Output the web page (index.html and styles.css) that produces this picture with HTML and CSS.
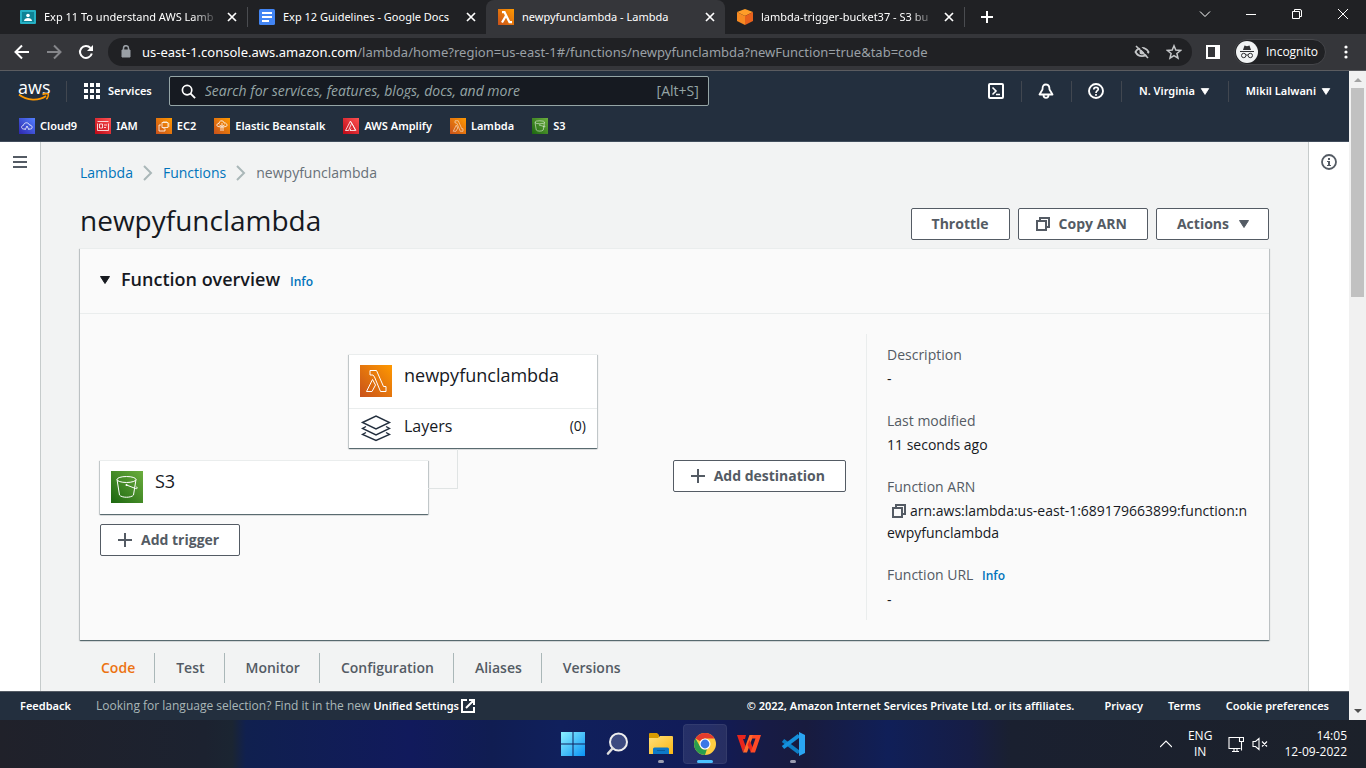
FILE: index.html
```html
<!DOCTYPE html>
<html lang="en">
<head>
<meta charset="utf-8">
<title>newpyfunclambda - Lambda</title>
<link rel="stylesheet" href="styles.css">
</head>
<body>
<svg class="defs" aria-hidden="true">
  <defs>
    <linearGradient id="orange" x1="0" y1="1" x2="1" y2="0"><stop offset="0" stop-color="#c8511b"/><stop offset="1" stop-color="#f90"/></linearGradient>
    <linearGradient id="green" x1="0" y1="1" x2="1" y2="0"><stop offset="0" stop-color="#1b660f"/><stop offset="1" stop-color="#6cae3e"/></linearGradient>
    <linearGradient id="red" x1="0" y1="1" x2="1" y2="0"><stop offset="0" stop-color="#bd0816"/><stop offset="1" stop-color="#ff5252"/></linearGradient>
    <linearGradient id="blue" x1="0" y1="1" x2="1" y2="0"><stop offset="0" stop-color="#2e27ad"/><stop offset="1" stop-color="#527fff"/></linearGradient>
    <linearGradient id="win" x1="0" y1="0" x2="1" y2="1"><stop offset="0" stop-color="#8cf0ff"/><stop offset="1" stop-color="#0a93f5"/></linearGradient>
    <linearGradient id="folder" x1="0" y1="0" x2="1" y2="1"><stop offset="0" stop-color="#ffe07a"/><stop offset="1" stop-color="#fbb614"/></linearGradient>
    <symbol id="lambda-icon" viewBox="0 0 32 32"><path fill="url(#orange)" d="M0 0h32v32H0z"/><path fill="none" stroke="#fff" d="M10 5.500h6.500L23.500 21.500H26v5h-5.500L14.500 12l-1.500-2h-3zM12.500 14.500l3 5.500-3.500 6.500H6.500z"/></symbol>
    <symbol id="s3-icon" viewBox="0 0 32 32"><path fill="url(#green)" d="M0 0h32v32H0z"/><g fill="none" stroke="#fff"><ellipse cx="15.500" cy="8.500" rx="9.500" ry="3"/><path d="M6 8.500l2.500 15.500c2 3 12 3 14 0L25 8.500M15.500 14l9 3.500c2 .6 2.500-.8.300-2"/></g><circle cx="15.500" cy="14" r="1" fill="#fff"/></symbol>
    <symbol id="copy" viewBox="0 0 16 16"><path fill="none" stroke="currentColor" stroke-width="2" d="M2 5h9v9H2zM5 5V2h9v9h-3"/></symbol>
    <symbol id="plus" viewBox="0 0 16 16"><path fill="none" stroke="currentColor" stroke-width="2" d="M8 1v14M1 8h14"/></symbol>
    <symbol id="caret" viewBox="0 0 12 10"><path fill="currentColor" stroke="currentColor" stroke-linejoin="round" d="M1.500 1.500h9L6 8.500z"/></symbol>
    <symbol id="x" viewBox="0 0 10 10"><path fill="none" stroke="currentColor" stroke-width="1.700" d="M1 1l8 8M9 1L1 9"/></symbol>
    <symbol id="chev" viewBox="0 0 10 16"><path fill="none" stroke="currentColor" stroke-width="2" d="M1 1l7 7-7 7"/></symbol>
  </defs>
</svg>

<header class="browser">
  <div class="tabstrip">
    <div class="tab">
      <svg class="ico16" viewBox="0 0 16 16"><rect y="1" width="16" height="14" rx="1" fill="#25b0c4"/><path fill="#0f8295" d="M2 3h12v10H2z"/><circle cx="8" cy="6.500" r="1.800" fill="#fff"/><path fill="#fff" d="M4 12c0-4 8-4 8 0z"/></svg>
      <span class="tab-title fade">Exp 11 To understand AWS Lamb</span>
      <button class="tab-close" aria-label="Close tab"><svg><use href="#x"/></svg></button>
    </div>
    <div class="tab split">
      <svg class="ico16" viewBox="0 0 16 16"><rect width="16" height="16" rx="1.500" fill="#4285f4"/><path stroke="#fff" stroke-width="2" d="M3 4h10M3 8h10M3 12h7"/></svg>
      <span class="tab-title">Exp 12 Guidelines - Google Docs</span>
      <button class="tab-close" aria-label="Close tab"><svg><use href="#x"/></svg></button>
    </div>
    <div class="tab active">
      <svg class="ico16" viewBox="0 0 16 16"><path fill="url(#orange)" d="M0 0h16v16H0z"/><path fill="none" stroke="#fff" stroke-width="2.200" d="M4 3.200h2.500l5 10H14M7.800 7L4 13.500"/></svg>
      <span class="tab-title">newpyfunclambda - Lambda</span>
      <button class="tab-close" aria-label="Close tab"><svg><use href="#x"/></svg></button>
    </div>
    <div class="tab">
      <svg class="ico16" viewBox="0 0 16 16"><path fill="#ff9d28" d="M8 0l8 3-8 4-8-4z"/><path fill="#f68a22" d="M0 3l8 4v9l-8-4z"/><path fill="#e8611c" d="M16 3L8 7v9l8-4z"/></svg>
      <span class="tab-title fade">lambda-trigger-bucket37 - S3 bu</span>
      <button class="tab-close" aria-label="Close tab"><svg><use href="#x"/></svg></button>
    </div>
    <button class="new-tab" aria-label="New tab"><svg viewBox="0 0 16 16"><path stroke="#fff" stroke-width="2" d="M8 2v12M2 8h12"/></svg></button>
    <div class="window-controls">
      <button aria-label="Search tabs"><svg viewBox="0 0 12 12"><path fill="none" stroke="#fff" d="M1 3.500l5 5 5-5"/></svg></button>
      <button aria-label="Minimize"><svg viewBox="0 0 12 12"><path stroke="#fff" d="M1 6.500h10"/></svg></button>
      <button aria-label="Restore"><svg viewBox="0 0 12 12"><path fill="none" stroke="#fff" d="M1.500 3.500h7v7h-7zM3.500 3V1.500H9q1.500 0 1.500 1.500v5.500H9"/></svg></button>
      <button aria-label="Close window"><svg viewBox="0 0 12 12"><path stroke="#fff" d="M1 1l10 10M11 1L1 11"/></svg></button>
    </div>
  </div>
  <div class="toolbar">
    <button class="tool" aria-label="Back"><svg viewBox="0 0 16 16"><path fill="none" stroke="#fff" stroke-width="2" d="M15 8H2M8 1.500L1.500 8 8 14.500"/></svg></button>
    <button class="tool" aria-label="Forward"><svg viewBox="0 0 16 16"><path fill="none" stroke="#85868a" stroke-width="2" d="M1 8h13M8 1.500L14.500 8 8 14.500"/></svg></button>
    <button class="tool" aria-label="Reload"><svg viewBox="0 0 16 16"><path fill="none" stroke="#fff" stroke-width="2" d="M13.800 9.500A6 6 0 1 1 12.500 4"/><path fill="#fff" d="M15 1v6H9z"/></svg></button>
    <div class="omnibox">
      <svg class="lock" viewBox="0 0 10 14"><path fill="#9aa0a6" d="M1 5h8v7H1z" stroke="#9aa0a6" stroke-linejoin="round"/><path fill="none" stroke="#9aa0a6" stroke-width="1.500" d="M2.500 5V3.200a2.500 2.500 0 0 1 5 0V5"/></svg>
      <div class="url"><b>us-east-1.console.aws.amazon.com</b>/lambda/home?region=us-east-1#/functions/newpyfunclambda?newFunction=true&amp;tab=code</div>
      <button aria-label="Third-party cookies blocked"><svg viewBox="0 0 16 16"><path fill="none" stroke="#c4c6c8" stroke-width="1.800" d="M1.500 8c3-5.500 10-5.500 13 0-3 5.500-10 5.500-13 0z"/><circle cx="8" cy="8" r="2.500" fill="#c4c6c8"/><path stroke="#202124" stroke-width="2" d="M4 1l12 12"/><path stroke="#c4c6c8" stroke-width="1.600" d="M2 2l12 12"/></svg></button>
      <button aria-label="Bookmark"><svg viewBox="0 0 16 16"><path fill="none" stroke="#c4c6c8" stroke-width="1.500" d="M8 1.800l1.800 4.300 4.700.4-3.600 3 1.100 4.600-4-2.500-4 2.500 1.100-4.600-3.600-3 4.700-.4z"/></svg></button>
    </div>
    <button class="tool side" aria-label="Side panel"><svg viewBox="0 0 14 14"><path fill="#fff" fill-rule="evenodd" d="M0 0h14v14H0zM2 2v10h7V2z"/></svg></button>
    <button class="incognito"><svg viewBox="0 0 22 22"><circle cx="11" cy="11" r="11" fill="#f1f3f4"/><path fill="#303134" d="M7 9l1.500-4.500 2.500.7 2.500-.7L15 9zM4 10h14v1H4z"/><g fill="none" stroke="#303134"><circle cx="7.700" cy="14.500" r="2.200"/><circle cx="14.300" cy="14.500" r="2.200"/><path d="M10 14.200q1-.7 2 0"/></g></svg>Incognito</button>
    <button class="tool kebab" aria-label="Menu"><svg viewBox="0 0 16 16" fill="#fff"><circle cx="8" cy="3" r="1.600"/><circle cx="8" cy="8" r="1.600"/><circle cx="8" cy="13" r="1.600"/></svg></button>
  </div>
</header>

<div class="viewport">
  <div class="page">
    <nav class="aws-nav">
      <div class="nav-main">
        <a class="logo" href="#"><span>aws</span><svg viewBox="0 0 32 9"><path fill="none" stroke="#f90" stroke-width="1.800" d="M1 1.500c8 6.500 20 6.500 27 1.500"/><path fill="none" stroke="#f90" stroke-width="1.500" d="M24.500 1.500c2-1.200 5.500-1 5.800-.2.300 1-.6 3.700-2 5"/></svg></a>
        <button class="services"><svg viewBox="0 0 16 16" fill="#fff"><path d="M0 0h4v4H0zM6 0h4v4H6zM12 0h4v4h-4zM0 6h4v4H0zM6 6h4v4H6zM12 6h4v4h-4zM0 12h4v4H0zM6 12h4v4H6zM12 12h4v4h-4z"/></svg>Services</button>
        <label class="search"><svg viewBox="0 0 16 16"><circle cx="6.500" cy="6.500" r="5" fill="none" stroke="#fff" stroke-width="1.800"/><path stroke="#fff" stroke-width="2" d="M10 10l5 5"/></svg><input type="text" aria-label="Search" placeholder="Search for services, features, blogs, docs, and more"><span>[Alt+S]</span></label>
        <div class="nav-tools">
          <button class="nav-icon" aria-label="CloudShell"><svg viewBox="0 0 16 16" fill="none" stroke="#fff" stroke-width="2"><rect x="1" y="1" width="14" height="14" rx="1"/><path stroke-width="1.600" d="M4.500 4.500L8 8l-3.500 3.500M8 11.500h4"/></svg></button>
          <button class="nav-icon" aria-label="Notifications"><svg viewBox="0 0 16 16" fill="none" stroke="#fff" stroke-width="1.800"><path stroke-linejoin="round" d="M8 1.500c-3 0-3.500 2-3.500 5L1.500 11.500h13l-3-5c0-3-.5-5-3.500-5zM5.500 12c0 3.800 5 3.800 5 0"/></svg></button>
          <button class="nav-icon" aria-label="Help"><svg viewBox="0 0 16 16" fill="none" stroke="#fff" stroke-width="1.900"><circle cx="8" cy="8" r="7"/><path stroke-width="1.700" d="M5.800 6.500c0-3 4.500-2.800 4.500-.3C10.300 7.700 8 7.800 8 10M8 11v1.800"/></svg></button>
          <button class="nav-menu region">N. Virginia<svg class="caret"><use href="#caret"/></svg></button>
          <button class="nav-menu">Mikil Lalwani<svg class="caret"><use href="#caret"/></svg></button>
        </div>
      </div>
      <div class="favorites">
        <a href="#"><svg viewBox="0 0 16 16"><path fill="url(#blue)" d="M0 0h16v16H0z"/><path fill="none" stroke="#fff" stroke-width=".8" d="M6 11H4.500C2 11 2 7.500 4.500 7.300 5 4 9.500 4 10.500 7c3-.3 3.500 4 1 4H10M8 8L6 12M8 8l2 4"/></svg>Cloud9</a>
        <a href="#"><svg viewBox="0 0 16 16"><path fill="url(#red)" d="M0 0h16v16H0z"/><path fill="none" stroke="#fff" stroke-width=".8" d="M2.500 3.500h11M2.500 5.500v7h11v-7M4.500 6h3v4h-3zM9 7h3M9 9.500h2"/></svg>IAM</a>
        <a href="#"><svg viewBox="0 0 16 16"><path fill="url(#orange)" d="M0 0h16v16H0z"/><path fill="none" stroke="#fff" stroke-width=".8" d="M6 4.500h6v5H6zM5 7H3v6h6v-2.500M8 3v1.500M10 3v1.500M12 6h1.500M12 8h1.500M8 10v1"/></svg>EC2</a>
        <a href="#"><svg viewBox="0 0 16 16"><path fill="url(#orange)" d="M0 0h16v16H0z"/><path fill="none" stroke="#fff" stroke-width=".8" d="M7 13V9L4 8.500C2 8 3 5 5 5.500 5 2 10 2 10 5c3-.5 4 3 2 3.500l-3 .5v4M8 5v5M5.500 7L8 8.500 10.500 7"/></svg>Elastic Beanstalk</a>
        <a href="#"><svg viewBox="0 0 16 16"><path fill="url(#red)" d="M0 0h16v16H0z"/><path fill="none" stroke="#fff" stroke-width=".8" d="M7.500 3L2.500 12.500h3l3-7zM9 5.500l3.500 7H7l1-2M8 4l5 8.500"/></svg>AWS Amplify</a>
        <a href="#"><svg><use href="#lambda-icon"/></svg>Lambda</a>
        <a href="#"><svg><use href="#s3-icon"/></svg>S3</a>
      </div>
    </nav>

    <div class="shell">
      <aside class="rail"><button aria-label="Open navigation"><svg viewBox="0 0 16 16"><path stroke="#545b64" stroke-width="2" d="M1 3h14M1 8h14M1 13h14"/></svg></button></aside>
      <main class="content">
        <nav class="crumbs"><a href="#">Lambda</a><svg><use href="#chev"/></svg><a href="#">Functions</a><svg><use href="#chev"/></svg><span>newpyfunclambda</span></nav>
        <div class="title-row">
          <h1>newpyfunclambda</h1>
          <div class="actions">
            <button class="btn">Throttle</button>
            <button class="btn with-icon"><svg><use href="#copy"/></svg>Copy ARN</button>
            <button class="btn">Actions<svg class="caret"><use href="#caret"/></svg></button>
          </div>
        </div>
        <section class="panel">
          <div class="panel-head"><svg class="caret"><use href="#caret"/></svg><h2>Function overview</h2><a class="info" href="#">Info</a></div>
          <div class="panel-body">
            <div class="diagram">
              <div class="node function">
                <div class="node-head"><svg><use href="#lambda-icon"/></svg>newpyfunclambda</div>
                <div class="layers"><svg viewBox="0 0 32 28"><g fill="none" stroke="#232f3e" stroke-width="1.400"><path d="M2.500 8.500L16 2l13.500 6.500L16 15z"/><path d="M6 12.500l-3.500 2L16 21l13.500-6.500-3.500-2M6 18.500l-3.500 2L16 26.500l13.500-6-3.500-2"/></g></svg><a href="#">Layers</a><span>(0)</span></div>
              </div>
              <div class="lane">
                <div class="triggers">
                  <div class="node"><div class="node-head"><svg><use href="#s3-icon"/></svg>S3</div></div>
                  <button class="btn with-icon"><svg><use href="#plus"/></svg>Add trigger</button>
                </div>
                <button class="btn with-icon"><svg><use href="#plus"/></svg>Add destination</button>
              </div>
            </div>
            <dl class="details">
              <div><dt>Description</dt><dd>-</dd></div>
              <div><dt>Last modified</dt><dd>11 seconds ago</dd></div>
              <div><dt>Function ARN</dt><dd class="arn"><button aria-label="Copy ARN"><svg><use href="#copy"/></svg></button>arn:aws:lambda:us-east-1:689179663899:function:newpyfunclambda</dd></div>
              <div><dt>Function URL <a class="info" href="#">Info</a></dt><dd>-</dd></div>
            </dl>
          </div>
        </section>
        <nav class="tabs"><a class="current" href="#">Code</a><a href="#">Test</a><a href="#">Monitor</a><a href="#">Configuration</a><a href="#">Aliases</a><a href="#">Versions</a></nav>
      </main>
      <aside class="rail right"><button aria-label="Open help"><svg viewBox="0 0 16 16"><circle cx="8" cy="8" r="7" fill="none" stroke="#545b64" stroke-width="1.800"/><path fill="#545b64" d="M7 4h2v2H7zM6 7h3v4h1v1H6v-1h1V8H6z"/></svg></button></aside>
    </div>

    <footer class="aws-footer">
      <a href="#">Feedback</a>
      <p>Looking for language selection? Find it in the new <a href="#">Unified Settings<svg viewBox="0 0 14 14"><path fill="none" stroke="#fff" stroke-width="2" d="M6 1H1v12h12V8M8 1h5v5M13 1L5 9"/></svg></a></p>
      <span class="copyright">© 2022, Amazon Internet Services Private Ltd. or its affiliates.</span>
      <a href="#">Privacy</a><a href="#">Terms</a><a href="#">Cookie preferences</a>
    </footer>
  </div>
  <div class="scrollbar"><svg viewBox="0 0 8 4"><path fill="#a3a3a3" d="M0 4l4-4 4 4z"/></svg><div class="thumb"></div><svg viewBox="0 0 8 4"><path fill="#505050" d="M0 0l4 4 4-4z"/></svg></div>
</div>

<div class="taskbar">
  <div class="apps">
    <button aria-label="Start"><svg viewBox="0 0 24 24" fill="url(#win)"><path d="M0 0h24v24H0z"/><path stroke="#10205c" stroke-width="1" d="M12 0v24M0 12h24"/></svg></button>
    <button aria-label="Search"><svg viewBox="0 0 24 24"><circle cx="13.500" cy="10" r="8.500" fill="#3d4a80" stroke="#eee" stroke-width="2"/><path stroke="#ddd" stroke-width="2.600" stroke-linecap="round" d="M7.500 16.500L3 21.500"/></svg></button>
    <button class="open" aria-label="File Explorer"><svg viewBox="0 0 24 24"><path fill="#d99b00" d="M0 2q0-1 1-1h7l2 2v4H0z"/><path fill="url(#folder)" d="M0 6h9l2-2h12q1 0 1 1v17H0z"/><path fill="#0d78c8" d="M4 22v-5q0-1.500 1.500-1.500h13Q20 15.500 20 17v5z"/><path stroke="#0a5a9c" d="M8 18.500h8"/></svg></button>
    <button class="open focused" aria-label="Google Chrome"><svg viewBox="0 0 24 24"><circle cx="12" cy="12" r="11" fill="#ffcd40"/><path fill="#e33b2e" d="M12 1a11 11 0 0 1 9.500 5.500H12A5.500 5.500 0 0 0 7.200 9.300L2.500 6.500A11 11 0 0 1 12 1z"/><path fill="#2a9d4d" d="M2.500 6.500L7.200 14.700A5.500 5.500 0 0 0 14 17.100L12 23A11 11 0 0 1 2.500 6.500z"/><circle cx="12" cy="12" r="5.500" fill="#fff"/><circle cx="12" cy="12" r="4.400" fill="#3b78e7"/></svg></button>
    <button aria-label="WPS Office"><svg viewBox="0 0 24 24"><path fill="#e8251c" d="M0 3h9l-1 4H6l2.500 7L6 20.500z"/><path fill="#ff6a2c" d="M6 20.500h4L16.500 3h-4z"/><path fill="#e8251c" d="M10.500 13l2-5 3.500 8-2 4.500z"/><path fill="#ff4a26" d="M13.500 20.500H18L24 3h-8l-1.500 3.500h4z"/></svg></button>
    <button class="open" aria-label="Visual Studio Code"><svg viewBox="0 0 24 24"><path fill="none" stroke="#0d7dc4" stroke-width="4" stroke-linejoin="round" d="M2 8.500l16 12"/><path fill="none" stroke="#1490dd" stroke-width="4" stroke-linejoin="round" d="M2 15.500L18 3.500"/><path fill="#2aa5f2" d="M18 0l6 3v18l-6 3z"/></svg></button>
  </div>
  <div class="tray">
    <button aria-label="Hidden icons"><svg viewBox="0 0 12 12"><path fill="none" stroke="#fff" stroke-width="1.200" d="M0 9l6-6 6 6"/></svg></button>
    <span class="lang">ENG<br>IN</span>
    <span class="status"><svg viewBox="0 0 16 16" fill="none" stroke="#fff" stroke-width="1.100"><path d="M11 1.500H1v11h11.500M4 15.500h7M6 13v2.500M9 13v2.500M11.500 1.500h4v4h-4zM13.500 5.500v9"/></svg><svg viewBox="0 0 16 16" fill="none" stroke="#fff" stroke-width="1.100"><path d="M1 5.500h2.500L7 2.500v11L3.500 10.500H1zM10 5.500l5 5M15 5.500l-5 5"/></svg></span>
    <time>14:05<br>12-09-2022</time>
  </div>
</div>
</body>
</html>
```

FILE: styles.css
```css
* { box-sizing: border-box; }
html, body { height: 100%; }
body {
  margin: 0;
  display: flex;
  flex-direction: column;
  overflow: hidden;
  font-family: "Open Sans", "Noto Sans", sans-serif;
  font-size: 14px;
  line-height: 22px;
  color: #16191f;
}
button { font: inherit; color: inherit; background: none; border: 0; padding: 0; display: flex; align-items: center; justify-content: center; }
a { color: #0073bb; text-decoration: none; }
h1, h2, p, dl, dd { margin: 0; }
svg { flex: none; display: block; }
.defs { position: absolute; width: 0; height: 0; }

/* Browser chrome */
.browser { flex: none; font-family: "Noto Sans", "Open Sans", sans-serif; font-size: 12px; line-height: 16px; color: #fff; background: #202124; }
.tabstrip { display: flex; height: 34px; padding-left: 8px; align-items: stretch; }
.tab { display: flex; align-items: center; width: 239px; padding: 0 8px 0 12px; }
.tab.split { position: relative; }
.tab.split::before, .new-tab::before { content: ""; position: absolute; left: 0; top: 7px; height: 20px; width: 1px; background: #4a4c50; }
.tab.active { background: #35363a; border-radius: 8px 8px 0 0; }
.ico16 { width: 16px; height: 16px; }
.tab-title { flex: 1; min-width: 0; margin: 0 6px 0 8px; overflow: hidden; white-space: nowrap; font-size: 11px; }
.tab-title.fade { -webkit-mask-image: linear-gradient(90deg, #000 85%, transparent); mask-image: linear-gradient(90deg, #000 85%, transparent); }
.tab-close { width: 14px; }
.tab-close svg { width: 10px; height: 10px; }
.new-tab { position: relative; width: 46px; }
.new-tab svg { width: 16px; height: 16px; }
.window-controls { display: flex; margin-left: auto; }
.window-controls button { width: 46px; padding-bottom: 6px; }
.window-controls svg { width: 12px; height: 12px; }
.toolbar { display: flex; align-items: center; height: 37px; padding-left: 6px; background: #35363a; border-bottom: 1px solid #5b5c60; }
.tool { width: 32px; height: 28px; }
.tool svg { width: 16px; height: 16px; }
.omnibox { flex: 1; min-width: 0; display: flex; align-items: center; gap: 16px; height: 28px; margin-left: 6px; padding: 0 10px 0 13px; border-radius: 14px; background: #202124; }
.lock { width: 10px; height: 14px; }
.url { flex: 1; min-width: 0; margin-left: -5px; overflow: hidden; white-space: nowrap; font-size: 13px; line-height: 20px; color: #9aa0a6; }
.url b { font-weight: 400; color: #fff; }
.omnibox svg:not(.lock) { width: 16px; height: 16px; }
.side { width: 42px; }
.tool.side svg { width: 14px; height: 14px; }
.incognito { gap: 8px; height: 26px; padding: 0 7px 0 1px; border: 1px solid #45464a; border-radius: 13px; background: #202124; font-family: "Open Sans", "Noto Sans", sans-serif; }
.incognito svg { width: 22px; height: 22px; }
.kebab { width: 40px; }

/* Page area */
.viewport { flex: 1; min-height: 0; display: flex; }
.page { flex: 1; min-width: 0; display: flex; flex-direction: column; }
.scrollbar { width: 17px; display: flex; flex-direction: column; align-items: center; padding: 7px 0; background: #f1f1f1; }
.scrollbar svg { width: 8px; height: 4px; }
.thumb { flex: none; width: 13px; height: 209px; margin: 6px 0 auto; background: #c1c1c1; }

/* AWS navigation */
.aws-nav { flex: none; background: #232f3e; color: #fff; font-family: "Noto Sans", "Open Sans", sans-serif; font-size: 11px; font-weight: 600; line-height: 16px; border-bottom: 1px solid #414d5c; }
.nav-main { display: flex; align-items: center; height: 40px; padding-left: 18px; }
.logo { display: block; width: 49px; border-right: 1px solid #414750; font-family: "Open Sans", "Noto Sans", sans-serif; font-size: 18px; font-weight: 500; line-height: 12px; color: #fff; }
.logo svg { width: 32px; height: 9px; }
.services { gap: 8px; margin: 0 17px; }
.services svg { width: 16px; height: 16px; }
.search { display: flex; align-items: center; width: 540px; height: 30px; padding: 0 9px 0 11px; gap: 9px; background: #161a21; border: 1px solid #95a5a6; border-radius: 2px; font-family: "Open Sans", "Noto Sans", sans-serif; font-size: 14px; font-weight: 400; color: #95a5a6; }
.search svg { width: 15px; height: 15px; }
.search input { flex: 1; min-width: 0; padding: 0; border: 0; background: none; font: inherit; color: #fff; }
.search input::placeholder { color: #95a5a6; font-style: italic; }
.nav-tools { display: flex; margin-left: auto; }
.nav-icon { width: 50px; height: 21px; border-right: 1px solid #414750; }
.nav-icon svg { width: 16px; height: 16px; }
.nav-menu { gap: 5px; padding: 0 18px 0 17px; }
.region { border-right: 1px solid #414750; }
.caret { width: 10px; height: 9px; }
.favorites { display: flex; align-items: center; gap: 18px; height: 30px; padding-left: 19px; }
.favorites a { display: flex; align-items: center; gap: 5px; color: #fff; }
.favorites svg { width: 16px; height: 16px; }

/* Console */
.shell { flex: 1; min-height: 0; display: flex; overflow: hidden; }
.rail { flex: none; width: 41px; background: #fff; border-right: 1px solid #c6cbcb; padding: 12px 12px; }
.rail.right { border-right: 0; border-left: 1px solid #c6cbcb; }
.rail svg { width: 16px; height: 16px; }
.content { flex: 1; min-width: 0; padding: 20px 39px; background: #f2f3f3; }
.crumbs { display: flex; align-items: center; gap: 10px; color: #687078; }
.crumbs svg { width: 10px; height: 16px; color: #aab7b8; }
.title-row { display: flex; align-items: flex-end; justify-content: space-between; margin-top: 18px; padding-bottom: 8px; }
h1 { font-size: 28px; font-weight: 400; line-height: 36px; padding-bottom: 2px; }
.actions { display: flex; gap: 8px; }
.btn { height: 32px; padding: 0 20px; background: #fff; border: 1px solid #545b64; border-radius: 2px; font-weight: 700; color: #545b64; }
.btn svg { width: 16px; height: 16px; margin-right: 8px; }
.btn.with-icon { padding-left: 16px; }
.btn svg.caret { width: 12px; height: 10px; margin: 0 -2px 0 9px; }
.panel, .node { background: #fff; border-top: 1px solid #eaeded; box-shadow: 0 1px 1px 0 rgba(0, 28, 36, .5), 1px 1px 1px 0 rgba(0, 28, 36, .15), -1px 1px 1px 0 rgba(0, 28, 36, .15); }
.panel { background: #fafafa; }
.panel-head { display: flex; align-items: center; height: 65px; padding: 0 20px 2px; border-bottom: 1px solid #eaeded; }
.panel-head .caret { width: 12px; height: 10px; margin: 0 10px 0 -1px; }
h2 { font-size: 18px; font-weight: 600; line-height: 22px; padding-bottom: 2px; }
.info { font-size: 12px; font-weight: 600; margin-left: 10px; }
.panel-head .info { padding-top: 4px; }
dt .info { margin-left: 5px; }
.panel-body { display: flex; padding: 20px; }
.diagram { flex: 1; min-width: 0; padding: 20px 20px 0 0; }
.node-head { display: flex; gap: 12px; height: 53px; padding: 10px 11px; font-size: 18px; line-height: 20px; }
.node-head svg, .layers svg { width: 32px; height: 32px; }
.function { position: relative; width: 248px; margin: 0 auto 12px; }
.function::after { content: ""; position: absolute; left: 79px; top: 94px; width: 29px; height: 39px; border: solid #e0e4e4; border-width: 0 1px 1px 0; }
.layers { display: flex; align-items: center; gap: 12px; height: 40px; padding: 0 11px 2px; border-top: 1px solid #eaeded; font-size: 16px; }
.layers a { flex: 1; color: #16191f; padding-bottom: 4px; }
.layers span { font-size: 14px; padding-bottom: 4px; }
.lane { display: flex; align-items: flex-start; justify-content: space-between; }
.triggers { display: flex; flex-direction: column; align-items: flex-start; gap: 10px; width: 44%; }
.triggers .node { width: 100%; }
.details { width: 383px; padding: 10px 0 9px 20px; border-left: 1px solid #eaeded; display: grid; gap: 20px; }
.details div { display: grid; gap: 2px; }
dt { color: #545b64; }
.arn { word-break: break-all; }
.arn button { display: inline-block; margin: 0 3px 0 4px; vertical-align: -3px; color: #545b64; }
.arn svg { width: 16px; height: 16px; }
.tabs { display: flex; margin-top: 13px; font-weight: 600; line-height: 30px; }
.tabs a { padding: 0 19px 0 21px; color: #545b64; border-right: 1px solid #aab7b8; }
.tabs a:last-child { border-right: 0; }
.tabs a.current { color: #ec7211; }

/* Footer */
.aws-footer { flex: none; display: flex; align-items: center; gap: 25px; height: 29px; padding: 0 20px; background: #232f3e; border-top: 1px solid #545b64; color: #fff; font-family: "Noto Sans", "Open Sans", sans-serif; font-size: 11px; line-height: 16px; font-weight: 600; white-space: nowrap; }
.aws-footer a { color: #fff; }
.aws-footer p { font-family: "Open Sans", "Noto Sans", sans-serif; font-size: 12px; font-weight: 400; color: #aab7b8; }
.aws-footer p a { display: inline-flex; align-items: center; gap: 2px; font-family: "Noto Sans", "Open Sans", sans-serif; font-size: 11px; font-weight: 600; }
.aws-footer svg { width: 14px; height: 14px; }
.copyright { margin: 0 5px 0 auto; }

/* Taskbar */
.taskbar { flex: none; display: grid; grid-template-columns: 1fr auto 1fr; height: 48px; font-size: 12px; line-height: 16px; color: #fff; background: linear-gradient(90deg, #20212a 0, #1c2230 15%, #1b2532 17%, #10204f 18%, #111a5c 30%, #101d52 36%, #10205c 41%, #111b58 52%, #171b45 56%, #181b3e 59%, #101f58 65%, #161d45 71%, #1a2030 74%, #1c212a 100%); }
.apps { grid-column: 2; display: flex; align-items: center; }
.apps button { position: relative; width: 44px; height: 40px; border-radius: 4px; }
.apps svg { width: 24px; height: 24px; }
.apps .focused { background: rgba(255, 255, 255, .09); box-shadow: inset 0 0 0 1px rgba(255, 255, 255, .06); }
.open::after { content: ""; position: absolute; bottom: 1px; left: 19px; width: 6px; height: 3px; border-radius: 2px; background: #9a9db0; }
.focused::after { left: 14px; width: 16px; background: #4cc2ff; }
.tray { display: flex; align-items: center; justify-content: flex-end; gap: 16px; padding-right: 19px; }
.tray button svg { width: 12px; height: 12px; }
.lang { text-align: center; }
.status { display: flex; gap: 8px; }
.status svg { width: 16px; height: 16px; }
time { text-align: right; }
```
